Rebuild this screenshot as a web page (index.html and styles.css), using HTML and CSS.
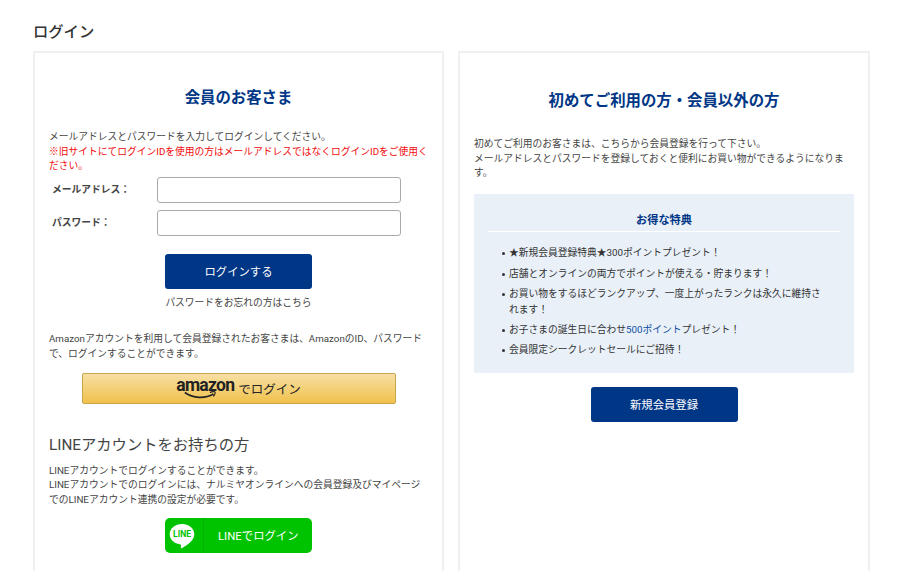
FILE: index.html
```html
<!DOCTYPE html>
<html lang="ja">
<head>
    <meta charset="UTF-8">
    <meta name="viewport" content="width=device-width, initial-scale=1.0">
    <title>ログイン</title>
    <link rel="stylesheet" href="styles.css">
</head>
<body>
    <div class="container">
        <h1>ログイン</h1>
        <div class="columns">
            <section class="panel member">
                <h2>会員のお客さま</h2>
                <p>メールアドレスとパスワードを入力してログインしてください。</p>
                <p class="notice">※旧サイトにてログインIDを使用の方はメールアドレスではなくログインIDをご使用ください。</p>
                <form>
                    <div class="field">
                        <label for="email">メールアドレス：</label>
                        <input type="email" id="email">
                    </div>
                    <div class="field">
                        <label for="password">パスワード：</label>
                        <input type="password" id="password">
                    </div>
                    <button type="button" class="btn">ログインする</button>
                </form>
                <a class="forgot" href="#">パスワードをお忘れの方はこちら</a>

                <p>Amazonアカウントを利用して会員登録されたお客さまは、AmazonのID、パスワードで、ログインすることができます。</p>
                <a class="amazon" href="#">
                    <span class="amazon-logo">
                        <span class="amazon-name">amazon</span>
                        <svg class="smile" width="34" height="9" viewBox="0 0 34 9">
                            <path d="M.8 1.500C9 7.500 21 7.900 29.500 3" fill="none" stroke="#222" stroke-width="1.7"/>
                            <path d="M26 1.600C28 .5 30.600.4 31 1C31.400 1.700 30.600 4 29.300 5.300" fill="none" stroke="#222" stroke-width="1.2"/>
                        </svg>
                    </span>
                    <span class="amazon-text">でログイン</span>
                </a>

                <h3>LINEアカウントをお持ちの方</h3>
                <p>LINEアカウントでログインすることができます。<br>LINEアカウントでのログインには、ナルミヤオンラインへの会員登録及びマイページでのLINEアカウント連携の設定が必要です。</p>
                <a class="line" href="#">
                    <span class="line-icon">
                        <svg width="26" height="26" viewBox="0 0 26 26">
                            <path d="M13 1C6 1 .7 5.500.7 11.200c0 5.100 4.200 9.100 10 10.100 1.600.3 1.500.9 1.100 3.500 0 .6.400.7.900.4C18 22.200 25.300 17.500 25.300 11.200 25.300 5.500 20 1 13 1z" fill="#fff"/>
                            <text x="13" y="14.200" text-anchor="middle" textLength="18" lengthAdjust="spacingAndGlyphs">LINE</text>
                        </svg>
                    </span>
                    <span class="line-text">LINEでログイン</span>
                </a>
            </section>

            <section class="panel guest">
                <h2>初めてご利用の方・会員以外の方</h2>
                <p>初めてご利用のお客さまは、こちらから会員登録を行って下さい。<br>メールアドレスとパスワードを登録しておくと便利にお買い物ができるようになります。</p>
                <div class="benefits">
                    <h4>お得な特典</h4>
                    <ul>
                        <li>★新規会員登録特典★300ポイントプレゼント！</li>
                        <li>店舗とオンラインの両方でポイントが使える・貯まります！</li>
                        <li>お買い物をするほどランクアップ、一度上がったランクは永久に維持されます！</li>
                        <li>お子さまの誕生日に合わせ<a href="#">500ポイント</a>プレゼント！</li>
                        <li>会員限定シークレットセールにご招待！</li>
                    </ul>
                </div>
                <button type="button" class="btn">新規会員登録</button>
            </section>
        </div>
    </div>
</body>
</html>
```
FILE: styles.css
```css
* {
    box-sizing: border-box;
}
body {
    margin: 0;
    height: 571px;
    overflow: hidden;
    background: #fff;
    color: #444;
    font-family: Roboto, "Noto Sans CJK JP", sans-serif;
    font-size: 9.75px;
    line-height: 14.6px;
}
h1, h2, h3, h4, p, ul {
    margin: 0;
    padding: 0;
}
a {
    color: inherit;
    text-decoration: none;
}
.container {
    width: 837px;
    height: 571px;
    margin-left: 33px;
    padding-top: 20px;
    overflow: hidden;
}
h1 {
    font-size: 15.3px;
    font-weight: 500;
    line-height: 24px;
    color: #333;
    margin-bottom: 7px;
}
.columns {
    display: flex;
    gap: 14px;
    height: 520px;
}
.panel {
    width: 411px;
    padding: 0 14px;
    border: 2px solid #f0f0f0;
    border-bottom: none;
}
.guest {
    width: 412px;
}
h2 {
    font-size: 15.4px;
    font-weight: bold;
    line-height: 24px;
    color: #003686;
    text-align: center;
}
.member h2 {
    margin: 33px 0 20px;
}
.guest h2 {
    margin: 36px 0 24px;
}
.notice {
    color: #f00a0a;
}
form {
    padding-top: 3px;
}
.field {
    display: flex;
    align-items: center;
    margin-bottom: 7px;
    padding-left: 3px;
}
.field label {
    width: 105px;
    padding-top: 1px;
    font-weight: bold;
    color: #444;
}
.field input {
    width: 244px;
    height: 26px;
    border: 1px solid #aaa;
    border-radius: 3px;
}
.btn {
    display: block;
    width: 147px;
    height: 35px;
    margin: 0 auto;
    padding: 0 0 1px;
    border: none;
    border-radius: 3px;
    background: #003686;
    color: #fff;
    font-family: inherit;
    font-size: 11.375px;
}
.member .btn {
    margin-top: 18px;
}
.forgot {
    display: block;
    margin: 7px 0 22px;
    text-align: center;
}
.amazon {
    display: flex;
    justify-content: center;
    width: 314px;
    height: 31px;
    margin: 11px auto 29px;
    border: 1px solid #c9a54e;
    border-radius: 2px;
    background: linear-gradient(#f7dfa5, #f0c14b);
    color: #222;
}
.amazon-logo {
    width: 58px;
    margin-right: 4px;
}
.amazon-name {
    display: block;
    height: 17px;
    font-size: 17.5px;
    font-weight: bold;
    line-height: 23px;
    letter-spacing: -0.7px;
}
.smile {
    display: block;
    margin-left: 8px;
}
.amazon-text {
    font-size: 12.5px;
    line-height: 31px;
}
h3 {
    font-size: 15.3px;
    font-weight: normal;
    line-height: 24px;
    margin-bottom: 7px;
}
.line {
    display: flex;
    align-items: center;
    width: 147px;
    height: 35px;
    margin: 11px auto 0;
    border-radius: 5px;
    background: #00c300;
    color: #fff;
}
.line-icon {
    display: flex;
    align-items: center;
    justify-content: center;
    width: 39px;
    height: 35px;
    padding-right: 4px;
    border-right: 1px solid #00b300;
}
.line-icon text {
    font-family: Roboto, sans-serif;
    font-size: 8.5px;
    font-weight: bold;
    fill: #00c300;
}
.line-text {
    margin-left: 14px;
    font-size: 11.375px;
}
.benefits {
    margin: 13px 0 14px;
    height: 179px;
    padding: 17px 14px 0;
    background: #e9f0f8;
}
h4 {
    font-size: 11.2px;
    line-height: 20px;
    color: #003686;
    text-align: center;
    border-bottom: 1px solid #fff;
}
ul {
    list-style: none;
    padding: 13.5px 14px 0 21px;
}
li {
    position: relative;
    margin-bottom: 4.8px;
    line-height: 15.6px;
    color: #333;
}
li::before {
    content: "";
    position: absolute;
    left: -7px;
    top: 7px;
    width: 3px;
    height: 3px;
    border-radius: 50%;
    background: #333;
}
li a {
    color: #0c4da2;
}
```
